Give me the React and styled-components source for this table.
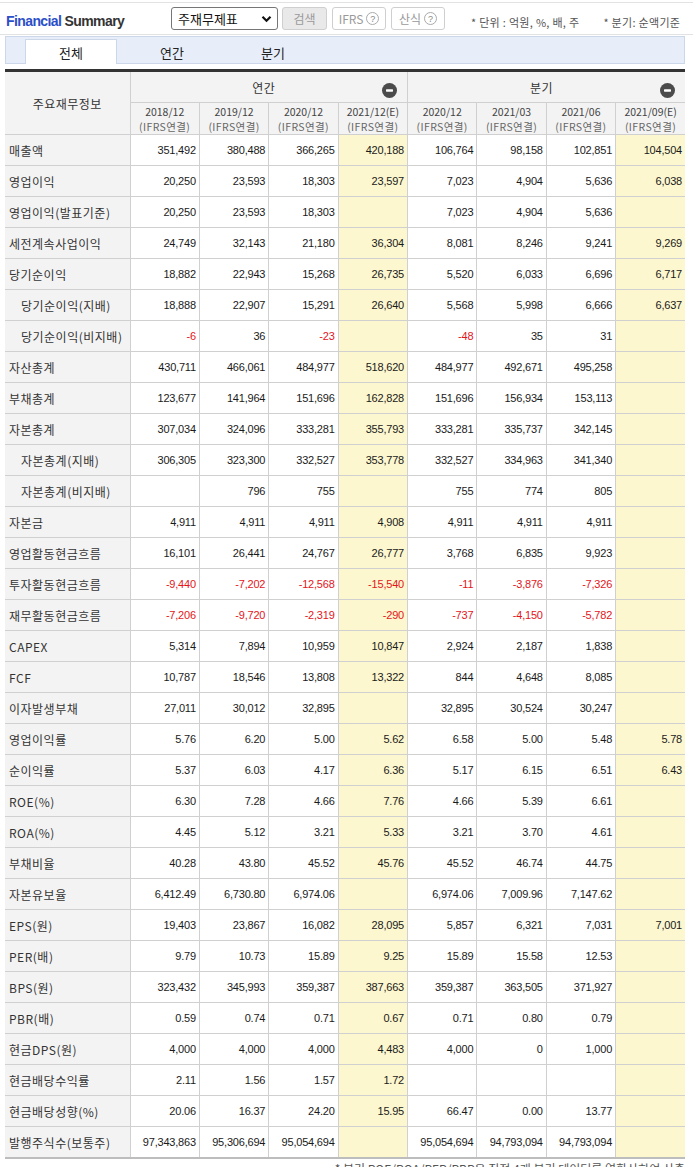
import React from "react";
import styled, { createGlobalStyle } from "styled-components";

const GlobalStyle = createGlobalStyle`
  body {
    margin: 0;
    background: #fff;
    font-family: "Noto Sans CJK KR", "Noto Sans", sans-serif;
    color: #333;
  }
`;

const KR = `"Noto Sans CJK KR", "Noto Sans", sans-serif`;
const NUM = `"Liberation Sans", Arial, sans-serif`;

const Page = styled.div`
  width: 693px;
  padding-top: 2px;
`;

const TitleBar = styled.div`
  display: flex;
  align-items: center;
  height: 31px;
  padding: 0 6px;
  border-top: 1px solid #e2e2e2;
  border-bottom: 1px solid #e2e2e2;
`;

const Title = styled.h2`
  flex: 0 0 165px;
  margin: 4px 0 0 0;
  font-family: "Liberation Sans", Arial, sans-serif;
  font-size: 14px;
  font-weight: 700;
  letter-spacing: -0.6px;
  color: #333;
  span {
    color: #2b4fc8;
  }
`;

const SelectBox = styled.div`
  display: flex;
  align-items: center;
  justify-content: space-between;
  box-sizing: border-box;
  width: 107px;
  height: 23px;
  padding: 0 5px 0 6px;
  border: 1px solid #767676;
  border-radius: 3px;
  font-family: ${KR};
  font-size: 13px;
  color: #111;
`;

const Btn = styled.div`
  display: flex;
  align-items: center;
  justify-content: center;
  gap: 3px;
  box-sizing: border-box;
  width: ${(p) => p.$w}px;
  height: 23px;
  margin-left: ${(p) => p.$ml}px;
  border: 1px solid #cfcfcf;
  border-radius: 3px;
  background: ${(p) => (p.$gray ? "#e9e9e9" : "#fff")};
  font-family: ${KR};
  font-size: 12px;
  color: #9a9a9a;
`;

const Help = styled.span`
  display: inline-flex;
  align-items: center;
  justify-content: center;
  width: 11px;
  height: 11px;
  border: 1px solid #aaa;
  border-radius: 50%;
  font-family: ${NUM};
  font-size: 9px;
  color: #888;
`;

const Note = styled.span`
  margin-left: ${(p) => p.$ml}px;
  margin-top: 7px;
  font-family: ${KR};
  font-size: 11px;
  letter-spacing: 0.3px;
  color: #555;
  white-space: nowrap;
`;

const TabBar = styled.div`
  display: flex;
  align-items: flex-end;
  box-sizing: border-box;
  width: 680px;
  height: 28px;
  margin: 1px 0 0 5px;
  padding-left: 19px;
  background: #e8eef9;
  border: 1px solid #cdd7ea;
`;

const Tab = styled.div`
  display: flex;
  align-items: center;
  justify-content: center;
  box-sizing: border-box;
  width: 92px;
  height: 25px;
  margin-right: 9px;
  margin-bottom: -1px;
  font-family: ${KR};
  font-size: 13px;
  color: #222;
  background: ${(p) => (p.$active ? "#fff" : "transparent")};
  border: 1px solid ${(p) => (p.$active ? "#cdd7ea" : "transparent")};
  border-bottom: none;
`;

const Table = styled.table`
  width: 680px;
  margin: 5px 0 0 5px;
  border-collapse: collapse;
  table-layout: fixed;
  border-top: 3px solid #333;
  border-bottom: 2px solid #bdbdbd;
`;

const Th = styled.th`
  height: ${(p) => p.$h || 30}px;
  padding: 0;
  background: #f3f3f3;
  border: 1px solid #d0d0d0;
  border-top: none;
  font-family: ${KR};
  font-weight: 400;
  font-size: 12px;
  letter-spacing: 0.5px;
  color: #333;
  &:first-child {
    border-left: none;
  }
  &:last-child {
    border-right: none;
  }
`;

const GroupHead = styled.div`
  display: grid;
  grid-template-columns: 1fr auto 1fr;
  align-items: center;
  padding-right: 10px;
`;

const Minus = styled.svg`
  justify-self: end;
  margin-top: 6px;
`;

const Period = styled.div`
  font-family: ${KR};
  font-size: 10.5px;
  line-height: 15px;
  color: #444;
  letter-spacing: 0;
  & + & {
    color: #666;
    letter-spacing: 0.4px;
  }
`;

const Label = styled.th`
  height: 30px;
  padding: 0 0 0 ${(p) => (p.$sub ? 16 : 4)}px;
  text-align: left;
  background: #f3f3f3;
  border: 1px solid #d0d0d0;
  border-left: none;
  font-family: ${KR};
  font-weight: 400;
  font-size: 12px;
  letter-spacing: 0.5px;
  color: #333;
  white-space: nowrap;
`;

const Cell = styled.td`
  height: 30px;
  padding: 0 3px 0 0;
  text-align: right;
  background: ${(p) => (p.$est ? "#fdf7cf" : "#fff")};
  border: 1px solid #d0d0d0;
  font-family: ${NUM};
  font-size: 11px;
  letter-spacing: -0.2px;
  color: ${(p) => (p.$neg ? "#e3151b" : "#1a1a1a")};
  &:last-child {
    border-right: none;
  }
`;

const Footnote = styled.div`
  width: 680px;
  margin: 1px 0 0 5px;
  text-align: right;
  font-family: ${KR};
  font-size: 12px;
  color: #555;
`;

const periods = [
  "2018/12",
  "2019/12",
  "2020/12",
  "2021/12(E)",
  "2020/12",
  "2021/03",
  "2021/06",
  "2021/09(E)",
];

const rows = [
  ["매출액", 0, "351,492", "380,488", "366,265", "420,188", "106,764", "98,158", "102,851", "104,504"],
  ["영업이익", 0, "20,250", "23,593", "18,303", "23,597", "7,023", "4,904", "5,636", "6,038"],
  ["영업이익(발표기준)", 0, "20,250", "23,593", "18,303", "", "7,023", "4,904", "5,636", ""],
  ["세전계속사업이익", 0, "24,749", "32,143", "21,180", "36,304", "8,081", "8,246", "9,241", "9,269"],
  ["당기순이익", 0, "18,882", "22,943", "15,268", "26,735", "5,520", "6,033", "6,696", "6,717"],
  ["당기순이익(지배)", 1, "18,888", "22,907", "15,291", "26,640", "5,568", "5,998", "6,666", "6,637"],
  ["당기순이익(비지배)", 1, "-6", "36", "-23", "", "-48", "35", "31", ""],
  ["자산총계", 0, "430,711", "466,061", "484,977", "518,620", "484,977", "492,671", "495,258", ""],
  ["부채총계", 0, "123,677", "141,964", "151,696", "162,828", "151,696", "156,934", "153,113", ""],
  ["자본총계", 0, "307,034", "324,096", "333,281", "355,793", "333,281", "335,737", "342,145", ""],
  ["자본총계(지배)", 1, "306,305", "323,300", "332,527", "353,778", "332,527", "334,963", "341,340", ""],
  ["자본총계(비지배)", 1, "", "796", "755", "", "755", "774", "805", ""],
  ["자본금", 0, "4,911", "4,911", "4,911", "4,908", "4,911", "4,911", "4,911", ""],
  ["영업활동현금흐름", 0, "16,101", "26,441", "24,767", "26,777", "3,768", "6,835", "9,923", ""],
  ["투자활동현금흐름", 0, "-9,440", "-7,202", "-12,568", "-15,540", "-11", "-3,876", "-7,326", ""],
  ["재무활동현금흐름", 0, "-7,206", "-9,720", "-2,319", "-290", "-737", "-4,150", "-5,782", ""],
  ["CAPEX", 0, "5,314", "7,894", "10,959", "10,847", "2,924", "2,187", "1,838", ""],
  ["FCF", 0, "10,787", "18,546", "13,808", "13,322", "844", "4,648", "8,085", ""],
  ["이자발생부채", 0, "27,011", "30,012", "32,895", "", "32,895", "30,524", "30,247", ""],
  ["영업이익률", 0, "5.76", "6.20", "5.00", "5.62", "6.58", "5.00", "5.48", "5.78"],
  ["순이익률", 0, "5.37", "6.03", "4.17", "6.36", "5.17", "6.15", "6.51", "6.43"],
  ["ROE(%)", 0, "6.30", "7.28", "4.66", "7.76", "4.66", "5.39", "6.61", ""],
  ["ROA(%)", 0, "4.45", "5.12", "3.21", "5.33", "3.21", "3.70", "4.61", ""],
  ["부채비율", 0, "40.28", "43.80", "45.52", "45.76", "45.52", "46.74", "44.75", ""],
  ["자본유보율", 0, "6,412.49", "6,730.80", "6,974.06", "", "6,974.06", "7,009.96", "7,147.62", ""],
  ["EPS(원)", 0, "19,403", "23,867", "16,082", "28,095", "5,857", "6,321", "7,031", "7,001"],
  ["PER(배)", 0, "9.79", "10.73", "15.89", "9.25", "15.89", "15.58", "12.53", ""],
  ["BPS(원)", 0, "323,432", "345,993", "359,387", "387,663", "359,387", "363,505", "371,927", ""],
  ["PBR(배)", 0, "0.59", "0.74", "0.71", "0.67", "0.71", "0.80", "0.79", ""],
  ["현금DPS(원)", 0, "4,000", "4,000", "4,000", "4,483", "4,000", "0", "1,000", ""],
  ["현금배당수익률", 0, "2.11", "1.56", "1.57", "1.72", "", "", "", ""],
  ["현금배당성향(%)", 0, "20.06", "16.37", "24.20", "15.95", "66.47", "0.00", "13.77", ""],
  ["발행주식수(보통주)", 0, "97,343,863", "95,306,694", "95,054,694", "", "95,054,694", "94,793,094", "94,793,094", ""],
];

const MinusIcon = () => (
  <Minus width="15" height="15" viewBox="0 0 15 15">
    <circle cx="7.5" cy="7.5" r="7.5" fill="#4b4b4b" />
    <rect x="4" y="6.3" width="7" height="2.4" rx="0.6" fill="#fff" />
  </Minus>
);

const Chevron = () => (
  <svg width="11" height="8" viewBox="0 0 11 8">
    <path d="M1.5 1.8 L5.5 5.8 L9.5 1.8" stroke="#111" strokeWidth="2.2" fill="none" />
  </svg>
);

const App = () => {
  return (
    <Page>
      <GlobalStyle />
      <TitleBar>
        <Title>
          <span>Financial</span> Summary
        </Title>
        <SelectBox>
          주재무제표
          <Chevron />
        </SelectBox>
        <Btn $w={45} $ml={4} $gray>
          검색
        </Btn>
        <Btn $w={54} $ml={5}>
          IFRS <Help>?</Help>
        </Btn>
        <Btn $w={54} $ml={5}>
          산식 <Help>?</Help>
        </Btn>
        <Note $ml={26}>* 단위 : 억원, %, 배, 주</Note>
        <Note $ml={24}>* 분기: 순액기준</Note>
      </TitleBar>

      <TabBar>
        <Tab $active>전체</Tab>
        <Tab>연간</Tab>
        <Tab>분기</Tab>
      </TabBar>

      <Table>
        <colgroup>
          <col style={{ width: 125 }} />
          {periods.map((_, i) => (
            <col key={i} />
          ))}
        </colgroup>
        <thead>
          <tr>
            <Th rowSpan={2}>주요재무정보</Th>
            <Th colSpan={4} $h={30}>
              <GroupHead>
                <span />
                <span>연간</span>
                <MinusIcon />
              </GroupHead>
            </Th>
            <Th colSpan={4} $h={30}>
              <GroupHead>
                <span />
                <span>분기</span>
                <MinusIcon />
              </GroupHead>
            </Th>
          </tr>
          <tr>
            {periods.map((p, i) => (
              <Th key={i} $h={31}>
                <Period>{p}</Period>
                <Period>(IFRS연결)</Period>
              </Th>
            ))}
          </tr>
        </thead>
        <tbody>
          {rows.map(([name, sub, ...vals]) => (
            <tr key={name}>
              <Label $sub={sub}>{name}</Label>
              {vals.map((v, i) => (
                <Cell key={i} $est={i === 3 || i === 7} $neg={v.startsWith("-")}>
                  {v}
                </Cell>
              ))}
            </tr>
          ))}
        </tbody>
      </Table>
      <Footnote>* 분기 ROE/ROA/PER/PBR은 직전 4개 분기 데이터를 연환산하여 산출</Footnote>
    </Page>
  );
};

export default App;
